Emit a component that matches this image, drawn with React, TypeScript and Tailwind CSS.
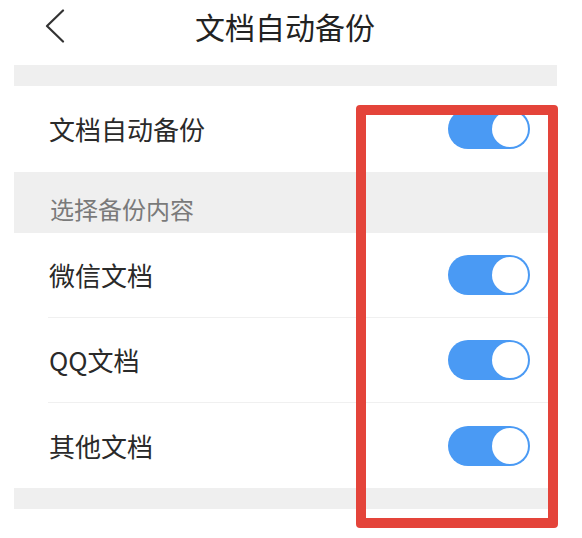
import React from "react";

function Toggle() {
  return (
    <div className="w-[82px] h-[40px] rounded-full bg-[#4a9af4] p-[2px] flex justify-end shrink-0">
      <div className="w-[36px] h-[36px] rounded-full bg-white" />
    </div>
  );
}

function Row({ label, last }: { label: string; last?: boolean }) {
  return (
    <div
      className={
        "h-[85px] flex items-center justify-between pl-[1px] pr-[27px] " +
        (last ? "" : "border-b border-[#f0f0f0]")
      }
    >
      <span className="text-[26px] text-[#2a2a2a] leading-none">{label}</span>
      <Toggle />
    </div>
  );
}

export default function App() {
  return (
    <div
      className="relative w-[582px] h-[538px] bg-white overflow-hidden"
      style={{ fontFamily: '"Noto Sans CJK SC", "Noto Sans", sans-serif' }}
    >
      <header className="h-[65px] grid grid-cols-[1fr_auto_1fr] items-center pb-[14px] pr-[12px]">
        <div className="pl-[45px] flex items-center">
          <svg width="20" height="34" viewBox="0 0 20 34" fill="none">
            <polyline
              points="18,1.5 2,17 18,32.5"
              stroke="#333"
              strokeWidth="2.2"
              strokeLinecap="round"
              strokeLinejoin="round"
            />
          </svg>
        </div>
        <h1 className="text-[30px] text-[#222] leading-none font-normal">文档自动备份</h1>
        <div />
      </header>

      <div className="ml-[14px] w-[543px]">
        <div className="h-[21px] bg-[#efefef]" />
        <div className="h-[86px] flex items-center justify-between pl-[35px] pr-[27px]">
          <span className="text-[26px] text-[#2a2a2a] leading-none">文档自动备份</span>
          <Toggle />
        </div>
        <div className="h-[61px] bg-[#efefef] flex items-center pl-[36px] pt-[12px]">
          <span className="text-[24px] text-[#7a7a7a] leading-none">选择备份内容</span>
        </div>
        <div className="pl-[34px]">
          <Row label="微信文档" />
          <Row label="QQ文档" />
          <Row label="其他文档" last />
        </div>
        <div className="h-[21px] bg-[#efefef]" />
      </div>

      <div className="absolute left-[356px] top-[105px] w-[202px] h-[423px] border-[10px] border-[#e4443a] rounded-[4px]" />
    </div>
  );
}
